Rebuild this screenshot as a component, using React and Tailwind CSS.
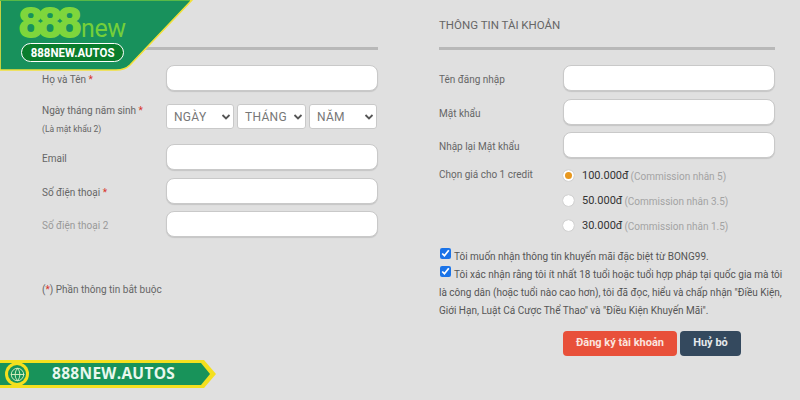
import React from 'react';
import { Globe } from 'lucide-react';

const inputClass = 'h-[26px] w-[212px] rounded-[8px] border border-[#c9c9c9] bg-white shadow-[0_1px_1px_rgba(0,0,0,0.12)]';

function Req() {
  return <span className="text-[#d9342b]"> *</span>;
}

function Row({ label, className = '' }) {
  return (
    <div className={`flex items-center ${className}`}>
      <div className="w-[124px] pt-[2px] text-[10px] text-[#666]">{label}</div>
      <input className={inputClass} />
    </div>
  );
}

function DateSelect({ label, width }) {
  return (
    <div className={`relative flex h-[25px] items-center rounded-[3px] border border-[#c9c9c9] bg-white pl-[7px] text-[12px] tracking-[0.3px] text-[#777] ${width}`}>
      {label}
      <svg className="absolute right-[2px] top-[8px]" width="10" height="8" viewBox="0 0 10 8" fill="none" stroke="#555" strokeWidth="1.8">
        <path d="M1.5 2 L5 5.5 L8.5 2" />
      </svg>
    </div>
  );
}

function Price({ checked, amount, note }) {
  return (
    <div className="flex h-[25px] items-center">
      <span className="flex h-[11px] w-[11px] items-center justify-center rounded-full bg-white shadow-[0_0_1px_rgba(0,0,0,0.4)]">
        {checked && <span className="h-[7px] w-[7px] rounded-full bg-[#e8981f]" />}
      </span>
      <span className="ml-[8px] pt-[2px] text-[11px] text-[#333]">{amount}</span>
      <span className="ml-[2px] pt-[2px] text-[10px] text-[#a3a3a3]">{note}</span>
    </div>
  );
}

function Logo() {
  return (
    <div className="absolute left-0 top-0 h-[72px] w-[194px]">
      <svg className="absolute left-0 top-0" width="194" height="72" viewBox="0 0 194 72">
        <path d="M0 0 H192 L130 65 Q125 70 116 70 H0 Z" fill="#18915c" stroke="#f2e13a" strokeWidth="1.6" />
        <path d="M0 0.5 H190" stroke="#58b947" strokeWidth="1" />
      </svg>
      <div className="absolute left-[19px] top-[2px] flex items-end font-['Liberation_Sans',sans-serif] leading-none text-[#7ed63c]">
        <span className="text-[42px] font-bold tracking-[-4px] [-webkit-text-stroke:1.8px_#7ed63c]">888</span>
        <span className="ml-[4px] mb-[3px] font-['Roboto',sans-serif] text-[25px] font-normal tracking-[-0.5px] text-[#74cf3a]">new</span>
      </div>
      <div className="absolute left-[21px] top-[43px] flex h-[19px] w-[103px] items-center justify-center rounded-full border border-white bg-[#0a7d2c] font-['Roboto',sans-serif] font-bold text-white">
        <span className="inline-block scale-x-[0.88] text-[13px]">888NEW.AUTOS</span>
      </div>
    </div>
  );
}

function Banner() {
  return (
    <div className="absolute left-0 top-[360px] h-[28px] w-[216px] bg-[#f4e01f] [clip-path:polygon(0_0,204px_0,216px_14px,204px_28px,0_28px)]">
      <div className="absolute left-0 top-[3px] flex h-[22px] w-[210px] items-center bg-[#18935a] [clip-path:polygon(0_0,201px_0,210px_11px,201px_22px,0_22px)]">
        <span className="ml-[52px] font-['Open_Sans',sans-serif] text-[15.5px] font-bold tracking-[0.3px] text-[#e8f7ee]">888NEW.AUTOS</span>
      </div>
      <div className="absolute left-[5px] top-[2px] flex h-[24px] w-[24px] items-center justify-center rounded-full bg-[#f4e01f]">
        <span className="flex h-[18px] w-[18px] items-center justify-center rounded-full bg-[#18935a]">
          <Globe size={15} strokeWidth={1.5} color="#d8f0c0" />
        </span>
      </div>
    </div>
  );
}

export default function App() {
  return (
    <div className="relative flex h-[400px] w-[800px] gap-[61px] overflow-hidden bg-[#e0e0e0] pl-[42px] font-['Roboto',sans-serif]">
      <div className="w-[336px]">
        <div className="h-[47px]" />
        <div className="h-[3px] bg-[#b8b8b8]" />
        <Row className="mt-[15px]" label={<>Họ và Tên<Req /></>} />
        <div className="mt-[13px] flex h-[25px] items-start">
          <div className="w-[124px] text-[10px] leading-[14px] text-[#666]">
            <div>Ngày tháng năm sinh<Req /></div>
            <div className="mt-[4px] text-[8.5px] leading-[14px] text-[#666]">(Là mật khẩu 2)</div>
          </div>
          <div className="flex gap-[3px]">
            <DateSelect label="NGÀY" width="w-[68px]" />
            <DateSelect label="THÁNG" width="w-[69px]" />
            <DateSelect label="NĂM" width="w-[68px]" />
          </div>
        </div>
        <Row className="mt-[15px]" label="Email" />
        <Row className="mt-[8px]" label={<>Số điện thoại<Req /></>} />
        <Row className="mt-[7px]" label={<span className="text-[#999]">Số điện thoại 2</span>} />
        <div className="mt-[45px] text-[10px] leading-[15px] text-[#666]">
          (<span className="text-[#d9342b]">*</span>) Phần thông tin bắt buộc
        </div>
      </div>

      <div className="w-[336px]">
        <div className="h-[47px] pt-[18px] text-[11.5px] leading-[15px] text-[#666]">THÔNG TIN TÀI KHOẢN</div>
        <div className="h-[3px] bg-[#b8b8b8]" />
        <Row className="mt-[15px]" label="Tên đăng nhập" />
        <Row className="mt-[8px]" label="Mật khẩu" />
        <Row className="mt-[7px]" label="Nhập lại Mật khẩu" />
        <div className="mt-[5px] flex">
          <div className="w-[124px] pt-[4px] text-[10px] text-[#666]">Chọn giá cho 1 credit</div>
          <div>
            <Price checked amount="100.000đ" note="(Commission nhân 5)" />
            <Price amount="50.000đ" note="(Commission nhân 3.5)" />
            <Price amount="30.000đ" note="(Commission nhân 1.5)" />
          </div>
        </div>
        <div className="mt-[10px] w-[346px] text-[10px] leading-[18px] text-[#555]">
          <div>
            <input type="checkbox" defaultChecked readOnly className="ml-[1px] mr-[3px] inline-block h-[11px] w-[11px] align-[1px] accent-[#1a73e8]" />
            Tôi muốn nhận thông tin khuyến mãi đặc biệt từ BONG99.
          </div>
          <div>
            <input type="checkbox" defaultChecked readOnly className="ml-[1px] mr-[3px] inline-block h-[11px] w-[11px] align-[1px] accent-[#1a73e8]" />
            Tôi xác nhận rằng tôi ít nhất 18 tuổi hoặc tuổi hợp pháp tại quốc gia mà tôi là công dân (hoặc tuổi nào cao hơn), tôi đã đọc, hiểu và chấp nhận "Điều Kiện, Giới Hạn, Luật Cá Cược Thể Thao" và "Điều Kiện Khuyến Mãi".
          </div>
        </div>
        <div className="mt-[11px] flex justify-end gap-[3px] pr-[34px]">
          <button className="h-[25px] w-[114px] rounded-[4px] bg-[#e8503a] text-[11px] font-bold text-[#fbe4df]">Đăng ký tài khoản</button>
          <button className="h-[25px] w-[61px] rounded-[4px] bg-[#34495e] text-[11px] font-bold text-[#e6e9ec]">Huỷ bỏ</button>
        </div>
      </div>

      <Logo />
      <Banner />
    </div>
  );
}
